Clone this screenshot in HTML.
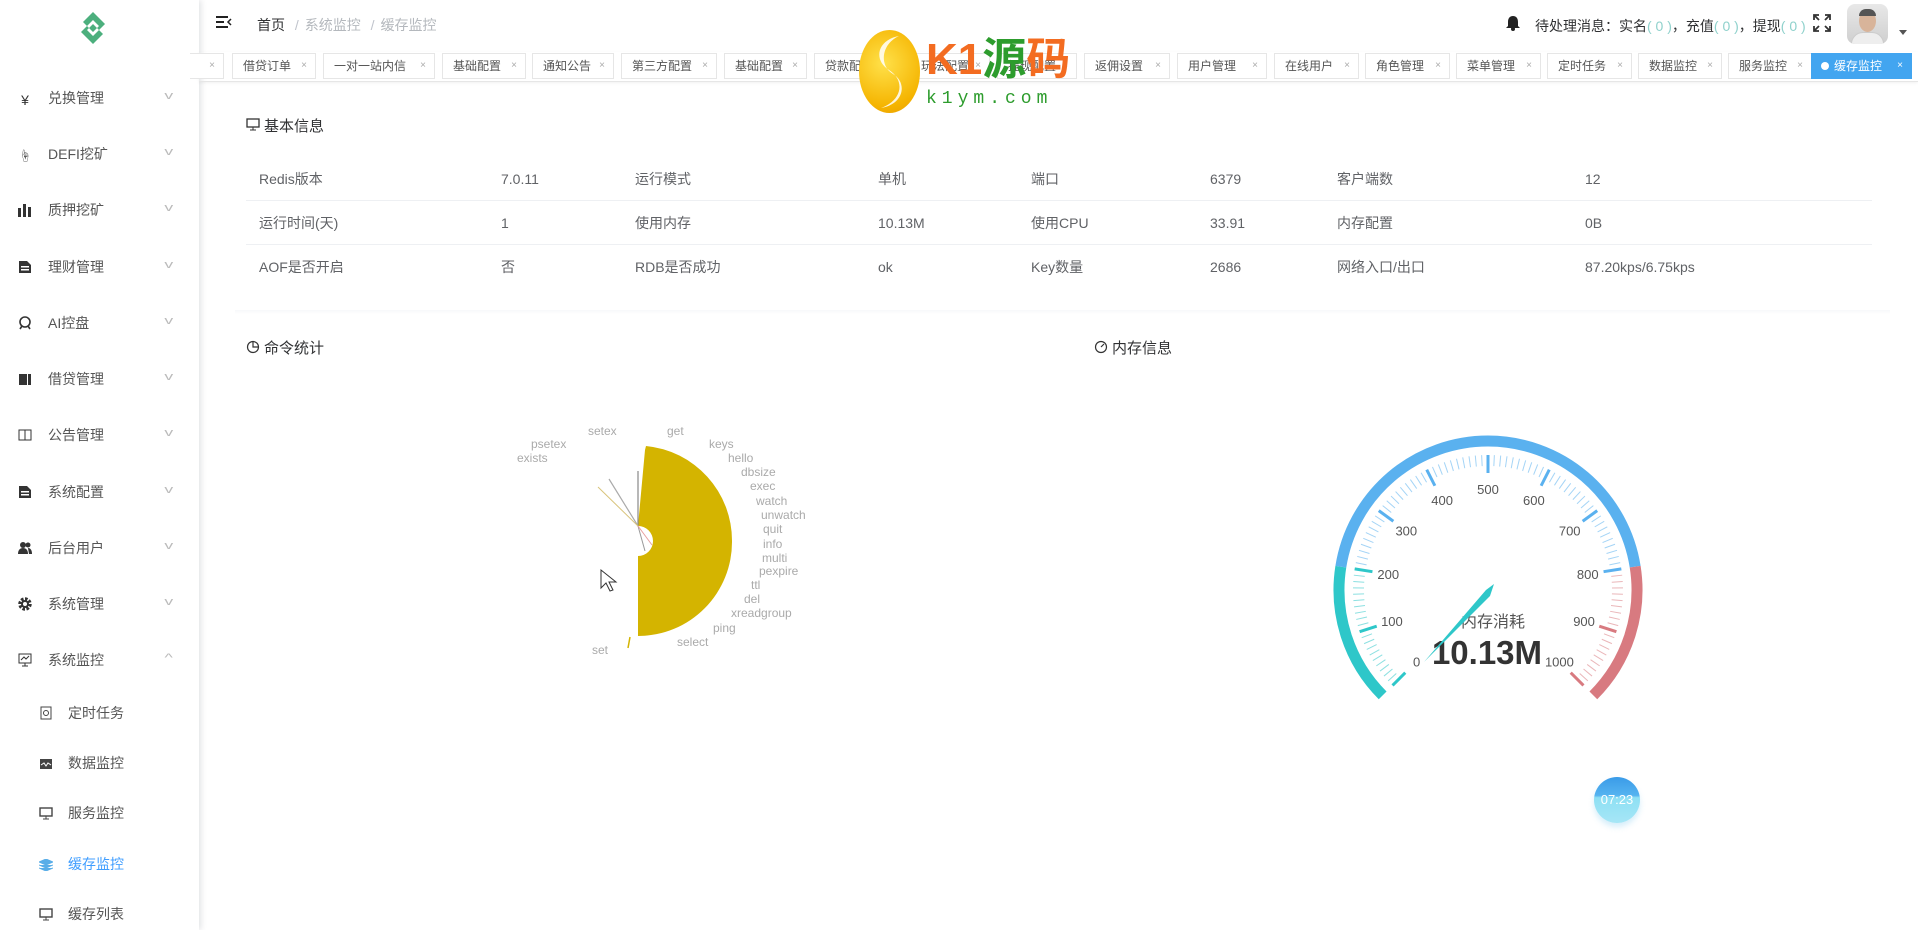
<!DOCTYPE html>
<html><head><meta charset="utf-8">
<style>
*{margin:0;padding:0;box-sizing:border-box}
body{width:1918px;height:930px;overflow:hidden;background:#fff;font-family:"Liberation Sans","Noto Sans CJK SC",sans-serif;color:#606266;position:relative}
.abs{position:absolute;white-space:nowrap}
#side{position:absolute;left:0;top:0;width:199px;height:930px;background:#fff;box-shadow:2px 0 6px rgba(0,21,41,.12)}
.mi{position:absolute;left:0;width:199px;font-size:14px;color:#555;height:20px;line-height:20px}
.mi .ic{position:absolute;left:17px;top:2px;width:16px;height:16px;text-align:center;font-size:14px;color:#333}
.mi .t{position:absolute;left:48px}
.mi .ch{position:absolute;left:166px;top:-2px;color:#bbb;font-size:11px;transform:scaleX(1.6)}
.sub .ic{left:38px}.sub .t{left:68px}
.tab{position:absolute;top:53px;height:26px;border:1px solid #e6e6e6;font-size:12px;color:#555;line-height:24px;padding-left:10px;background:#fff}
.tab b{font-weight:normal;color:#aaa;font-size:10px;position:absolute;right:8px}
.row{position:absolute;left:246px;width:1626px;height:44px;border-bottom:1px solid #eef0f3;font-size:14px}
.row span{position:absolute;top:12px;line-height:20px}
.pl{font-size:12px;fill:#aaa;font-family:"Liberation Sans",sans-serif}
</style></head><body>

<div id="side">
  <svg class="abs" style="left:77px;top:10px" width="32" height="36" viewBox="0 0 32 36"><path d="M16 2 L28 14 L22 20 L16 14 L10 20 L16 26 L22 20 L26 24 L16 34 L4 22 L10 16 L16 22 L22 16 L16 10 L10 16 L6 12 Z" fill="#4caf7d"/></svg>
  <div class="mi" style="top:88px"><span class="ic">¥</span><span class="t">兑换管理</span><span class="ch">v</span></div>
  <div class="mi" style="top:144px"><span class="ic" style="font-size:12px">☝</span><span class="t">DEFI挖矿</span><span class="ch">v</span></div>
  <div class="mi" style="top:200px"><span class="ic"><svg width="14" height="14"><rect x="0" y="5" width="3" height="9" fill="#333"/><rect x="5" y="1" width="3" height="13" fill="#333"/><rect x="10" y="4" width="3" height="10" fill="#333"/></svg></span><span class="t">质押挖矿</span><span class="ch">v</span></div>
  <div class="mi" style="top:257px"><span class="ic"><svg width="14" height="14"><path d="M1 1h8l4 4v8H1z" fill="#333"/><rect x="3" y="6" width="8" height="1.5" fill="#fff"/><rect x="3" y="9" width="8" height="1.5" fill="#fff"/></svg></span><span class="t">理财管理</span><span class="ch">v</span></div>
  <div class="mi" style="top:313px"><span class="ic"><svg width="14" height="14"><circle cx="7" cy="6" r="5" fill="none" stroke="#333" stroke-width="1.6"/><path d="M2 13l2-3M12 13l-2-3" stroke="#333" stroke-width="1.6"/></svg></span><span class="t">AI控盘</span><span class="ch">v</span></div>
  <div class="mi" style="top:369px"><span class="ic"><svg width="14" height="14"><rect x="1" y="2" width="8" height="11" fill="#333"/><rect x="10" y="2" width="3" height="11" fill="#333"/></svg></span><span class="t">借贷管理</span><span class="ch">v</span></div>
  <div class="mi" style="top:425px"><span class="ic"><svg width="14" height="14"><rect x="1" y="2" width="12" height="10" fill="none" stroke="#333"/><line x1="7" y1="2" x2="7" y2="12" stroke="#333"/></svg></span><span class="t">公告管理</span><span class="ch">v</span></div>
  <div class="mi" style="top:482px"><span class="ic"><svg width="14" height="14"><path d="M1 1h8l4 4v8H1z" fill="#333"/><rect x="3" y="6" width="8" height="1.5" fill="#fff"/><rect x="3" y="9" width="8" height="1.5" fill="#fff"/></svg></span><span class="t">系统配置</span><span class="ch">v</span></div>
  <div class="mi" style="top:538px"><span class="ic"><svg width="14" height="14"><circle cx="5" cy="4" r="3" fill="#333"/><path d="M0 13c0-4 2-6 5-6s5 2 5 6z" fill="#333"/><circle cx="10" cy="4" r="2.5" fill="#333"/><path d="M10 7c3 0 4 3 4 6h-3z" fill="#333"/></svg></span><span class="t">后台用户</span><span class="ch">v</span></div>
  <div class="mi" style="top:594px"><span class="ic"><svg width="14" height="14"><circle cx="7" cy="7" r="5" fill="none" stroke="#333" stroke-width="3.5" stroke-dasharray="2.5 1.4"/><circle cx="7" cy="7" r="4" fill="#333"/><circle cx="7" cy="7" r="2" fill="#fff"/></svg></span><span class="t">系统管理</span><span class="ch">v</span></div>
  <div class="mi" style="top:650px"><span class="ic"><svg width="14" height="14"><rect x="1" y="1" width="12" height="9" fill="none" stroke="#333"/><path d="M3 7l3-3 2 2 3-3M7 10v3M4 13h6" stroke="#333" fill="none"/></svg></span><span class="t">系统监控</span><span class="ch">^</span></div>
  <div class="mi sub" style="top:703px"><span class="ic"><svg width="12" height="14"><rect x="1" y="1" width="10" height="12" fill="none" stroke="#444"/><circle cx="6" cy="7" r="2.5" fill="none" stroke="#444"/></svg></span><span class="t">定时任务</span></div>
  <div class="mi sub" style="top:753px"><span class="ic"><svg width="12" height="12"><rect x="0" y="1" width="12" height="10" fill="#444"/><path d="M1 7l3-2 2 3 2-3 3 2" stroke="#fff" fill="none"/></svg></span><span class="t">数据监控</span></div>
  <div class="mi sub" style="top:803px"><span class="ic"><svg width="14" height="13"><rect x="1" y="1" width="12" height="8" fill="none" stroke="#444" stroke-width="1.4"/><path d="M7 9v3M4 12h6" stroke="#444"/></svg></span><span class="t">服务监控</span></div>
  <div class="mi sub" style="top:854px;color:#409eff"><span class="ic"><svg width="14" height="12"><path d="M7 0l7 3-7 3-7-3z M0 6l7 3 7-3M0 9l7 3 7-3" fill="#5aaee8" stroke="#5aaee8"/></svg></span><span class="t">缓存监控</span></div>
  <div class="mi sub" style="top:904px"><span class="ic"><svg width="14" height="13"><rect x="1" y="1" width="12" height="8" fill="none" stroke="#444" stroke-width="1.4"/><path d="M7 9v3M4 12h6" stroke="#444"/></svg></span><span class="t">缓存列表</span></div>
</div>

<!-- header -->
<svg class="abs" style="left:215px;top:15px" width="18" height="16"><path d="M1 2h12M1 7h8M1 12h12" stroke="#222" stroke-width="2"/><path d="M16 4l-3 3 3 3" stroke="#222" stroke-width="1.5" fill="none"/></svg>
<div class="abs" style="left:257px;top:15px;font-size:14px;color:#303133">首页 <span style="color:#c0c4cc;margin:0 6px">/</span><span style="color:#b4b8bd">系统监控</span> <span style="color:#c0c4cc;margin:0 6px">/</span><span style="color:#b4b8bd">缓存监控</span></div>
<svg class="abs" style="left:1506px;top:15px" width="14" height="16"><path d="M7 1c3 0 5 2 5 6v4l2 2H0l2-2V7c0-4 2-6 5-6z" fill="#222"/><circle cx="7" cy="14" r="2" fill="#222"/></svg>
<div class="abs" style="left:1535px;top:16px;font-size:14px;color:#303133">待处理消息：实名<span style="color:#8fd1cc">( 0 )</span>，充值<span style="color:#8fd1cc">( 0 )</span>，提现<span style="color:#8fd1cc">( 0 )</span></div>
<svg class="abs" style="left:1813px;top:14px" width="18" height="18"><path d="M1 6V1h5M1 1l5 5M12 1h5v5M17 1l-5 5M1 12v5h5M1 17l5-5M17 12v5h-5M17 17l-5-5" stroke="#333" stroke-width="1.8" fill="none"/></svg>
<div class="abs" style="left:1847px;top:4px;width:41px;height:40px;border-radius:8px;background:linear-gradient(#e8e8e8,#cfcfcf);overflow:hidden">
 <div style="position:absolute;left:12px;top:6px;width:17px;height:22px;border-radius:50%;background:#d8b49a"></div>
 <div style="position:absolute;left:12px;top:5px;width:17px;height:7px;border-radius:8px 8px 0 0;background:#555"></div>
 <div style="position:absolute;left:4px;top:28px;width:33px;height:16px;border-radius:12px 12px 0 0;background:#eee;border:1px solid #ccc"></div>
</div>
<div class="abs" style="left:1899px;top:30px;width:0;height:0;border-left:4px solid transparent;border-right:4px solid transparent;border-top:5px solid #555"></div>

<!-- tabs -->
<div style="position:absolute;left:199px;top:52px;width:1719px;height:30px;border-bottom:1px solid #e6e6e6;box-shadow:0 1px 3px rgba(0,0,0,.06)"></div>
<div class="tab" style="left:190px;width:34px;border-left:none"><b>×</b></div>
<div class="tab" style="left:232px;width:84px">借贷订单<b>×</b></div>
<div class="tab" style="left:323px;width:112px">一对一站内信<b>×</b></div>
<div class="tab" style="left:442px;width:84px">基础配置<b>×</b></div>
<div class="tab" style="left:532px;width:82px">通知公告<b>×</b></div>
<div class="tab" style="left:621px;width:96px">第三方配置<b>×</b></div>
<div class="tab" style="left:724px;width:83px">基础配置<b>×</b></div>
<div class="tab" style="left:814px;width:90px">贷款配置<b>×</b></div>
<div class="tab" style="left:910px;width:80px">玩法配置<b>×</b></div>
<div class="tab" style="left:997px;width:80px">提现配置<b>×</b></div>
<div class="tab" style="left:1084px;width:86px">返佣设置<b>×</b></div>
<div class="tab" style="left:1177px;width:90px">用户管理<b>×</b></div>
<div class="tab" style="left:1274px;width:85px">在线用户<b>×</b></div>
<div class="tab" style="left:1365px;width:85px">角色管理<b>×</b></div>
<div class="tab" style="left:1456px;width:85px">菜单管理<b>×</b></div>
<div class="tab" style="left:1547px;width:85px">定时任务<b>×</b></div>
<div class="tab" style="left:1638px;width:84px">数据监控<b>×</b></div>
<div class="tab" style="left:1728px;width:84px">服务监控<b>×</b></div>
<div class="tab" style="left:1811px;width:101px;background:#42a5f0;border-color:#42a5f0;color:#fff;padding-left:9px"><span style="display:inline-block;width:8px;height:8px;border-radius:50%;background:#fff;margin-right:5px"></span>缓存监控<b style="color:#fff">×</b></div>

<!-- watermark -->
<div class="abs" style="left:859px;top:30px;width:61px;height:83px;border-radius:50%;background:radial-gradient(circle at 40% 40%,#ffe14a,#f5b400 70%,#e89a00)"></div>
<svg class="abs" style="left:859px;top:30px" width="61" height="83"><path d="M40 6C18 10 14 30 30 40S44 70 22 78C46 74 48 52 34 44S22 14 40 6z" fill="#fff" opacity=".85"/></svg>
<div class="abs" style="left:926px;top:32px;font-size:44px;font-weight:bold;line-height:56px;color:#f36c21">K1<span style="color:#2d9c2d">源</span>码</div>
<div class="abs" style="left:926px;top:89px;font-size:18px;letter-spacing:5px;color:#2d9c2d;font-family:'Liberation Mono',monospace">k1ym.com</div>

<!-- basic info -->
<svg class="abs" style="left:246px;top:118px" width="14" height="14"><rect x="1" y="1" width="12" height="8" fill="none" stroke="#333" stroke-width="1.3"/><path d="M7 9v3M4 12h6" stroke="#333"/></svg>
<div class="abs" style="left:264px;top:115px;font-size:15px;color:#303133">基本信息</div>
<div class="row" style="top:157px"><span style="left:13px">Redis版本</span><span style="left:255px">7.0.11</span><span style="left:389px">运行模式</span><span style="left:632px">单机</span><span style="left:785px">端口</span><span style="left:964px">6379</span><span style="left:1091px">客户端数</span><span style="left:1339px">12</span></div>
<div class="row" style="top:201px"><span style="left:13px">运行时间(天)</span><span style="left:255px">1</span><span style="left:389px">使用内存</span><span style="left:632px">10.13M</span><span style="left:785px">使用CPU</span><span style="left:964px">33.91</span><span style="left:1091px">内存配置</span><span style="left:1339px">0B</span></div>
<div class="row" style="top:245px;border-bottom:none"><span style="left:13px">AOF是否开启</span><span style="left:255px">否</span><span style="left:389px">RDB是否成功</span><span style="left:632px">ok</span><span style="left:785px">Key数量</span><span style="left:964px">2686</span><span style="left:1091px">网络入口/出口</span><span style="left:1339px">87.20kps/6.75kps</span></div>
<div style="position:absolute;left:235px;top:310px;width:1655px;height:4px;background:linear-gradient(#f7f8fa,#fff)"></div>

<svg class="abs" style="left:246px;top:340px" width="14" height="14"><circle cx="7" cy="7" r="5.5" fill="none" stroke="#333" stroke-width="1.2"/><path d="M7 1.5V7h5.5" stroke="#333" fill="none" stroke-width="1.2"/></svg>
<div class="abs" style="left:264px;top:337px;font-size:15px;color:#303133">命令统计</div>
<svg class="abs" style="left:1094px;top:340px" width="14" height="14"><circle cx="7" cy="7" r="5.5" fill="none" stroke="#333" stroke-width="1.2"/><path d="M7 7l3-3" stroke="#333" stroke-width="1.2"/></svg>
<div class="abs" style="left:1112px;top:337px;font-size:15px;color:#303133">内存信息</div>

<!-- pie -->
<svg class="abs" style="left:0;top:0" width="1918" height="930">
 <path d="M646 446 A95 95 0 0 1 732 541 A94 94 0 0 1 638 636 L638 556 A15 15 0 1 0 638 526 L645 450Z" fill="#d4b400"/>
 <path d="M638 526 L638 471" stroke="#888" stroke-width="1.2"/>
 <path d="M638 526 L609 479" stroke="#aaa" stroke-width="1.2"/>
 <path d="M638 526 L598 487" stroke="#d8c37a" stroke-width="1"/>
 <path d="M638 526 L645 551" stroke="#999" stroke-width="1"/>
 <path d="M638 526 L652 545" stroke="#e8a0a0" stroke-width="1"/>
 <path d="M630 637 L628 648" stroke="#d4b400" stroke-width="1.5"/>
 <g class="pl">
  <text x="588" y="435">setex</text><text x="667" y="435">get</text>
  <text x="531" y="448">psetex</text><text x="517" y="462">exists</text>
  <text x="709" y="448">keys</text><text x="728" y="462">hello</text><text x="741" y="476">dbsize</text>
  <text x="750" y="490">exec</text><text x="756" y="505">watch</text><text x="761" y="519">unwatch</text>
  <text x="763" y="533">quit</text><text x="763" y="548">info</text><text x="762" y="562">multi</text>
  <text x="759" y="575">pexpire</text><text x="751" y="589">ttl</text><text x="744" y="603">del</text>
  <text x="731" y="617">xreadgroup</text><text x="713" y="632">ping</text><text x="677" y="646">select</text><text x="592" y="654">set</text>
 </g>
 <path d="M601 570v18l5-5 4 8 3-1-4-8 7 0z" fill="#fff" stroke="#333" stroke-width="1"/>
</svg>

<!-- gauge -->
<svg class="abs" style="left:0;top:0" width="1918" height="930" id="g">
 <text x="1493" y="627" text-anchor="middle" font-size="16" fill="#555" font-family="'Liberation Sans','Noto Sans CJK SC',sans-serif">内存消耗</text>
 <text x="1487" y="664" text-anchor="middle" font-size="33" font-weight="bold" fill="#333" font-family="'Liberation Sans',sans-serif">10.13M</text>
 <polygon points="1424,662 1486,590 1494,584 1490,596" fill="#2ec7c9"/>
</svg>
<script>
(function(){
 var s=document.getElementById('g'),cx=1488,cy=590,h='';
 function P(r,a){var t=a*Math.PI/180;return [cx+r*Math.cos(t),cy-r*Math.sin(t)];}
 function arc(r,a1,a2,c){var p=P(r,a1),q=P(r,a2),l=(a1-a2)>180?1:0;return '<path d="M'+p[0]+' '+p[1]+' A'+r+' '+r+' 0 '+l+' 1 '+q[0]+' '+q[1]+'" stroke="'+c+'" stroke-width="11" fill="none"/>';}
 h+=arc(149,225,171,'#2ec7c9');h+=arc(149,171,9,'#5ab1ef');h+=arc(149,9,-45,'#d87a80');
 for(var i=0;i<=100;i++){var a=225-2.7*i,v=i/100;var c=v<=0.2?'#2ec7c9':(v<=0.8?'#5ab1ef':'#d87a80');
  if(i%10==0){var p=P(135,a),q=P(117,a);h+='<line x1="'+p[0]+'" y1="'+p[1]+'" x2="'+q[0]+'" y2="'+q[1]+'" stroke="'+c+'" stroke-width="3"/>';
   var t=P(101,a);h+='<text x="'+t[0]+'" y="'+(t[1]+5)+'" text-anchor="middle" font-size="13" fill="#555" font-family="Liberation Sans,sans-serif">'+(i*10)+'</text>';}
  else{var p=P(135,a),q=P(124,a);h+='<line x1="'+p[0]+'" y1="'+p[1]+'" x2="'+q[0]+'" y2="'+q[1]+'" stroke="'+c+'" stroke-opacity=".55" stroke-width="1"/>';}
 }
 s.insertAdjacentHTML('afterbegin',h);
})();
</script>

<!-- float clock -->
<div class="abs" style="left:1594px;top:777px;width:46px;height:46px;border-radius:50%;background:linear-gradient(#3a9be8 0%,#55b3f0 40%,#8ee0f4 45%,#a6e6f6);box-shadow:0 4px 6px rgba(120,200,240,.3);color:#fff;font-size:13px;text-align:center;line-height:46px">07:23</div>
</body></html>
